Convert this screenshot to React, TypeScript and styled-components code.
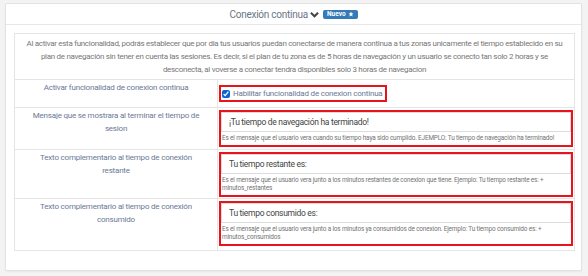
import React from 'react';
import styled, { createGlobalStyle } from 'styled-components';

const GlobalStyle = createGlobalStyle`
  html, body {
    margin: 0;
    padding: 0;
    background: #f3f3f3;
    font-family: Roboto, 'Liberation Sans', sans-serif;
  }
`;

const Page = styled.div`
  width: 588px;
  height: 276px;
  padding: 3px 6px 0 5px;
  box-sizing: border-box;
`;

const Panel = styled.div`
  background: #fff;
  border: 1px solid #e3e3e3;
  border-radius: 2px;
  box-shadow: 0 1px 2px rgba(0, 0, 0, 0.05);
  height: 268px;
  box-sizing: border-box;
`;

const PanelHeader = styled.div`
  height: 20px;
  border-bottom: 1px solid #e7e7e7;
  display: flex;
  align-items: center;
  justify-content: center;
  gap: 2px;
  color: #6b7685;
  font-size: 10px;
  letter-spacing: -0.25px;
`;

const Badge = styled.span`
  display: inline-flex;
  align-items: center;
  gap: 2px;
  margin-left: 2px;
  background: #337ab7;
  color: #fff;
  font-size: 6.5px;
  font-weight: 700;
  letter-spacing: 0;
  padding: 1px 4px;
  height: 9px;
  box-sizing: border-box;
  border-radius: 2px;
  line-height: 1;
`;

const PanelBody = styled.div`
  padding: 8px 6px 0 8px;
`;

const Table = styled.div`
  border: 1px solid #e5e5e5;
  display: flex;
  flex-direction: column;
`;

const Intro = styled.div`
  color: #777;
  font-size: 8px;
  letter-spacing: -0.3px;
  line-height: 13px;
  white-space: nowrap;
  text-align: center;
  padding: 3px 4px 3px;
  border-bottom: 1px solid #e5e5e5;
`;

const Row = styled.div<{ $h: number }>`
  display: grid;
  grid-template-columns: 203px 1fr;
  min-height: ${(p) => p.$h}px;
  &:not(:last-child) {
    border-bottom: 1px solid #e5e5e5;
  }
`;

const Label = styled.div`
  color: #6a7896;
  font-size: 8px;
  letter-spacing: -0.2px;
  line-height: 13px;
  text-align: center;
  padding: 1px 12px 0;
  border-right: 1px solid #e5e5e5;
`;

const Field = styled.div<{ $top: number }>`
  padding: ${(p) => p.$top}px 1px 0 1px;
  display: flex;
  flex-direction: column;
  align-items: flex-start;
`;

const Highlight = styled.div<{ $fill?: boolean }>`
  border: 2px solid #e8141b;
  box-sizing: border-box;
  align-self: ${(p) => (p.$fill ? 'stretch' : 'flex-start')};
`;

const CheckLabel = styled.label`
  display: flex;
  align-items: center;
  gap: 3px;
  color: #6a7896;
  font-size: 8px;
  letter-spacing: -0.2px;
  padding: 1px 2px 1px 1px;
  line-height: 11px;
`;

const Check = styled.input`
  width: 8px;
  height: 8px;
  margin: 0;
  accent-color: #0b64d6;
`;

const TextInput = styled.input`
  display: block;
  box-sizing: border-box;
  width: 100%;
  height: 20px;
  margin: 0;
  border: 1px solid #dcdcdc;
  padding: 0 7px;
  font-family: Roboto, 'Liberation Sans', sans-serif;
  font-size: 8.5px;
  letter-spacing: -0.3px;
  color: #444;
  outline: none;
`;

const Help = styled.div`
  color: #737373;
  font-size: 6.4px;
  letter-spacing: -0.15px;
  line-height: 8px;
  padding: 2px 1px 3px;
`;

const Chevron = () => (
  <svg width="9" height="7" viewBox="0 0 10 7">
    <path d="M1 1.5 L5 5.5 L9 1.5" fill="none" stroke="#444" strokeWidth="2.2" />
  </svg>
);

const Star = () => (
  <svg width="6" height="6" viewBox="0 0 24 24">
    <path
      d="M12 2l3 7 7 .6-5.4 4.7 1.7 7.2L12 17.8 5.7 21.5l1.7-7.2L2 9.6 9 9z"
      fill="#fff"
    />
  </svg>
);

type TextRow = {
  label: string;
  value: string;
  help: string;
  h: number;
};

const textRows: TextRow[] = [
  {
    label: 'Mensaje que se mostrara al terminar el tiempo de sesion',
    value: '¡Tu tiempo de navegación ha terminado!',
    help:
      'Es el mensaje que el usuario vera cuando su tiempo haya sido cumplido. EJEMPLO: Tu tiempo de navegación ha terminado!',
    h: 41,
  },
  {
    label: 'Texto complementario al tiempo de conexión restante',
    value: 'Tu tiempo restante es:',
    help:
      'Es el mensaje que el usuario vera junto a los minutos restantes de conexion que tiene. Ejemplo: Tu tiempo restante es: + minutos_restantes',
    h: 48,
  },
  {
    label: 'Texto complementario al tiempo de conexión consumido',
    value: 'Tu tiempo consumido es:',
    help:
      'Es el mensaje que el usuario vera junto a los minutos ya consumidos de conexion. Ejemplo: Tu tiempo consumido es: + minutos_consumidos',
    h: 51,
  },
];

export default function App() {
  return (
    <>
      <GlobalStyle />
      <Page>
        <Panel>
          <PanelHeader>
            Conexión continua <Chevron />
            <Badge>
              Nuevo <Star />
            </Badge>
          </PanelHeader>
          <PanelBody>
            <Table>
              <Intro>
                Al activar esta funcionalidad, podrás establecer que por dia tus usuarios puedan
                conectarse de manera continua a tus zonas unicamente el tiempo establecido en su
                <br />
                plan de navegación sin tener en cuenta las sesiones. Es decir, si el plan de tu zona
                es de 5 horas de navegación y un usuario se conecto tan solo 2 horas y se
                <br />
                desconecta, al voverse a conectar tendra disponibles solo 3 horas de navegacion
              </Intro>
              <Row $h={27}>
                <Label>Activar funcionalidad de conexion continua</Label>
                <Field $top={5}>
                  <Highlight>
                    <CheckLabel>
                      <Check type="checkbox" defaultChecked />
                      Habilitar funcionalidad de conexion continua
                    </CheckLabel>
                  </Highlight>
                </Field>
              </Row>
              {textRows.map((r) => (
                <Row key={r.value} $h={r.h}>
                  <Label>{r.label}</Label>
                  <Field $top={2}>
                    <Highlight $fill>
                      <TextInput defaultValue={r.value} />
                      <Help>{r.help}</Help>
                    </Highlight>
                  </Field>
                </Row>
              ))}
            </Table>
          </PanelBody>
        </Panel>
      </Page>
    </>
  );
}
